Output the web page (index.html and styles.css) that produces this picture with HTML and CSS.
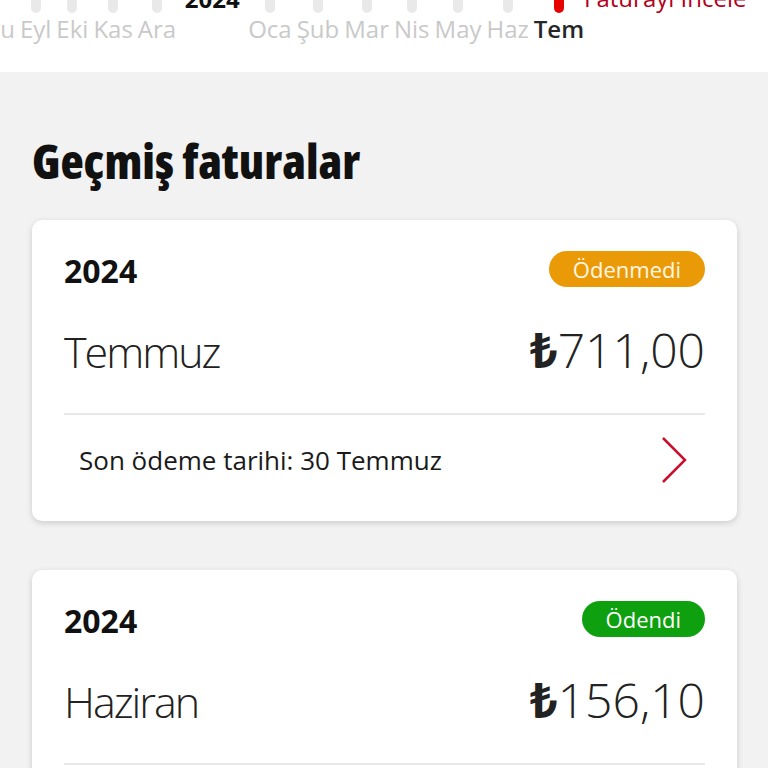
FILE: index.html
```html
<!DOCTYPE html>
<html lang="tr">
<head>
    <meta charset="UTF-8">
    <meta name="viewport" content="width=device-width, initial-scale=1">
    <title>Geçmiş faturalar</title>
    <link rel="stylesheet" href="styles.css">
</head>
<body>
    <div class="header">
        <div class="months">
            <div class="month"><span class="bar"></span><span class="label">Ağu</span></div>
            <div class="month"><span class="bar"></span><span class="label">Eyl</span></div>
            <div class="month"><span class="bar"></span><span class="label">Eki</span></div>
            <div class="month"><span class="bar"></span><span class="label">Kas</span></div>
            <div class="month"><span class="bar"></span><span class="label">Ara</span></div>
            <div class="year">2024</div>
            <div class="month"><span class="bar"></span><span class="label">Oca</span></div>
            <div class="month"><span class="bar"></span><span class="label">Şub</span></div>
            <div class="month"><span class="bar"></span><span class="label">Mar</span></div>
            <div class="month"><span class="bar"></span><span class="label">Nis</span></div>
            <div class="month"><span class="bar"></span><span class="label">May</span></div>
            <div class="month"><span class="bar"></span><span class="label">Haz</span></div>
            <div class="month active">
                <span class="bar"></span><span class="label">Tem</span>
                <span class="tip">Faturayı İncele</span>
            </div>
        </div>
    </div>

    <div class="content">
        <h1 class="title">Geçmiş faturalar</h1>

        <div class="card">
            <div class="card-top">
                <div class="row">
                    <span class="year-label">2024</span>
                    <span class="badge unpaid">Ödenmedi</span>
                </div>
                <div class="row amount-row">
                    <span class="month-name">Temmuz</span>
                    <span class="amount"><b>₺</b>711,00</span>
                </div>
            </div>
            <div class="card-bottom">
                <span class="due">Son ödeme tarihi: 30 Temmuz</span>
                <svg class="chevron" width="28" height="48" viewBox="0 0 28 48">
                    <polyline points="3,2 25,24 3,46" fill="none" stroke="#c8102e" stroke-width="2.5"/>
                </svg>
            </div>
        </div>

        <div class="card">
            <div class="card-top">
                <div class="row">
                    <span class="year-label">2024</span>
                    <span class="badge paid">Ödendi</span>
                </div>
                <div class="row amount-row">
                    <span class="month-name">Haziran</span>
                    <span class="amount"><b>₺</b>156,10</span>
                </div>
            </div>
            <div class="card-bottom">
                <span class="due">Son ödeme tarihi: 30 Haziran</span>
                <svg class="chevron" width="28" height="48" viewBox="0 0 28 48">
                    <polyline points="3,2 25,24 3,46" fill="none" stroke="#c8102e" stroke-width="2.5"/>
                </svg>
            </div>
        </div>
    </div>
</body>
</html>
```

FILE: styles.css
```css
html, body {
    margin: 0;
    padding: 0;
}

body {
    background: #f2f2f2;
    font-family: "Open Sans", "Noto Sans", sans-serif;
    color: #222;
    overflow: hidden;
}

/* month strip at the top (page is scrolled, so it is cut off) */
.header {
    height: 72px;
    background: #fff;
    overflow: hidden;
}

.months {
    display: flex;
    gap: 5px;
    margin-left: -28px;
}

.month {
    position: relative;
    display: flex;
    flex-direction: column;
    align-items: center;
}

.bar {
    width: 10px;
    height: 13px;
    background: #e9e9e9;
    border-radius: 0 0 5px 5px;
}

.label {
    font-size: 24px;
    line-height: 30px;
    margin-top: 1px;
    color: #c9c9c9;
}

.month.active .bar {
    background: #e60000;
}

.month.active .label {
    color: #262626;
    font-weight: 600;
}

.tip {
    position: absolute;
    left: 100%;
    top: -17px;
    font-size: 24px;
    line-height: 30px;
    color: #b3001b;
    white-space: nowrap;
}

.year {
    width: 62px;
    margin-top: -16px;
    font-size: 24px;
    font-weight: 700;
    line-height: 30px;
    color: #111;
    text-align: center;
}

/* list */
.content {
    padding: 0 31px 0 32px;
}

.title {
    margin: 61px 0 31px;
    font-size: 48px;
    font-weight: 800;
    font-stretch: 75%;
    line-height: 56px;
    color: #111;
}

.card {
    background: #fff;
    border-radius: 10px;
    box-shadow: 0 2px 6px rgba(0, 0, 0, 0.16);
    padding: 0 32px;
    margin-bottom: 49px;
}

.card-top {
    padding-top: 31px;
    padding-bottom: 33px;
    border-bottom: 2px solid #e8e8e8;
}

.row {
    display: flex;
    justify-content: space-between;
    align-items: center;
}

.amount-row {
    align-items: baseline;
    margin-top: 35px;
}

.year-label {
    padding-top: 4px;
    font-size: 32px;
    font-weight: 700;
    line-height: 32px;
    color: #111;
}

.badge {
    height: 36px;
    line-height: 36px;
    padding: 0 24px;
    border-radius: 18px;
    font-size: 22px;
    color: #fff;
}

.badge.unpaid {
    background: #eb9a07;
    color: #fff7e6;
}

.badge.paid {
    background: #0fa00f;
}

.month-name {
    font-size: 43px;
    font-weight: 300;
    letter-spacing: -2px;
    line-height: 56px;
    color: #222;
}

.amount {
    font-size: 48px;
    font-weight: 300;
    line-height: 56px;
    color: #222;
}

.amount b {
    font-weight: 700;
}

.card-bottom {
    display: flex;
    justify-content: space-between;
    align-items: center;
    padding: 21px 17px 37px 15px;
}

.due {
    font-size: 26px;
    color: #1a1a1a;
}

.chevron {
    display: block;
}
```
